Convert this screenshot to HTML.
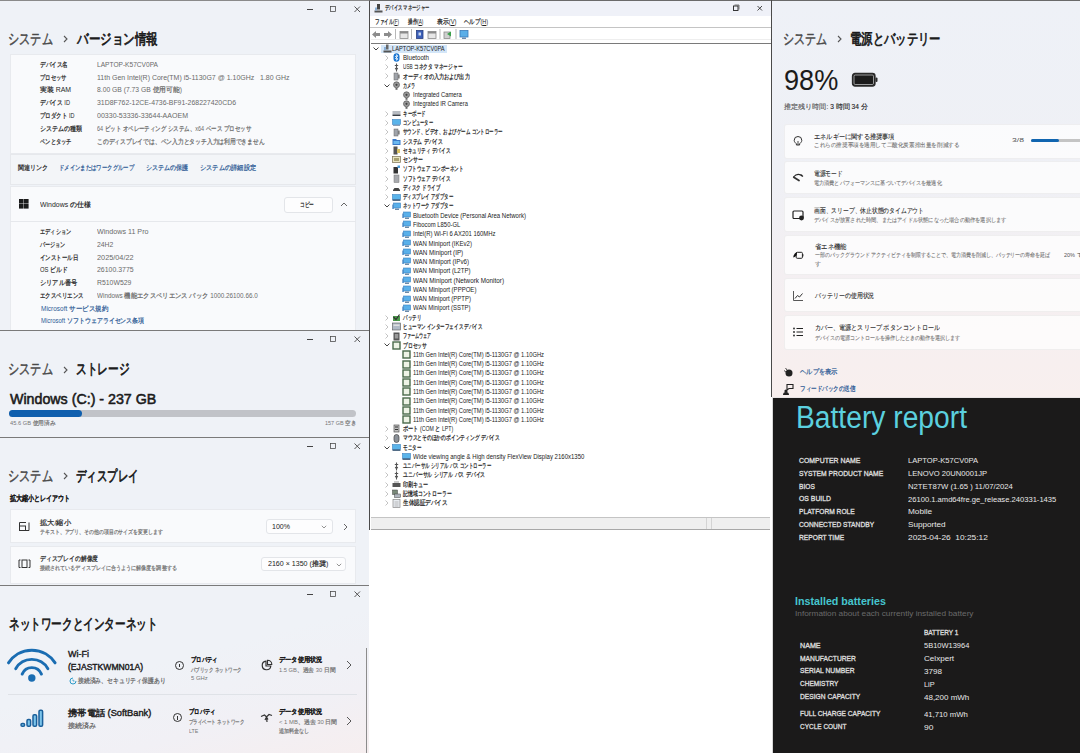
<!DOCTYPE html><html><head><meta charset="utf-8"><style>
html,body{margin:0;padding:0;width:1080px;height:753px;overflow:hidden;background:#fff}
body{position:relative;font-family:"Liberation Sans",sans-serif}
.r,.t{position:absolute}
.t{white-space:nowrap}
.j{-webkit-text-stroke:0.22px currentColor}
</style></head><body>
<div class="r" style="left:0px;top:0px;width:370px;height:330px;background:#eff2f7;"></div>
<div class="r" style="left:0px;top:0px;width:370px;height:1px;background:#8a8a8a;"></div>
<svg class="r" style="left:300px;top:3px" width="66" height="12" viewBox="0 0 66 12"><path d="M7 6.5H13" stroke="#444" stroke-width="1"/><rect x="30.5" y="3.5" width="5" height="5" fill="none" stroke="#444" stroke-width="0.75"/><path d="M54.5 3.5L60 9M60 3.5L54.5 9" stroke="#444" stroke-width="0.9"/></svg>
<div id="s0" class="t " style="left:8.3px;top:28.9px;font-size:14.5px;line-height:20.3px;color:#4a4a4a;font-weight:normal;-webkit-text-stroke:0.45px currentColor;transform:scaleX(0.7450);transform-origin:0 50%;">システム</div>
<svg class="r" style="left:63px;top:35.0px" width="5" height="8" viewBox="0 0 5 8"><path d="M1 1L4 4L1 7" fill="none" stroke="#555" stroke-width="1.1"/></svg>
<div id="s1" class="t " style="left:76.7px;top:28.9px;font-size:14.5px;line-height:20.3px;color:#1b1b1b;font-weight:normal;-webkit-text-stroke:0.7px currentColor;transform:scaleX(0.7695);transform-origin:0 50%;">バージョン情報</div>
<div class="r" style="left:10px;top:54px;width:346px;height:100px;background:#f9fafc;border:1px solid #e8eaee;box-sizing:border-box"></div>
<div id="s2" class="t " style="left:40px;top:59.6px;font-size:7px;line-height:9.8px;color:#262626;font-weight:normal;transform:scaleX(0.8000);transform-origin:0 50%;"><span class="j">デバイス名</span></div>
<div id="s3" class="t " style="left:96.7px;top:59.6px;font-size:7px;line-height:9.8px;color:#6a6a6a;font-weight:normal;transform:scaleX(0.9425);transform-origin:0 50%;">LAPTOP-K57CV0PA</div>
<div id="s4" class="t " style="left:40px;top:72.5px;font-size:7px;line-height:9.8px;color:#262626;font-weight:normal;transform:scaleX(0.7571);transform-origin:0 50%;"><span class="j">プロセッサ</span></div>
<div id="s5" class="t " style="left:96.7px;top:72.5px;font-size:7px;line-height:9.8px;color:#6a6a6a;font-weight:normal;transform:scaleX(0.9964);transform-origin:0 50%;">11th Gen Intel(R) Core(TM) i5-1130G7 @ 1.10GHz&nbsp;&nbsp; 1.80 GHz</div>
<div id="s6" class="t " style="left:40px;top:85.3px;font-size:7px;line-height:9.8px;color:#262626;font-weight:normal;transform:scaleX(0.9841);transform-origin:0 50%;"><span class="j">実装</span> RAM</div>
<div id="s7" class="t " style="left:96.7px;top:85.3px;font-size:7px;line-height:9.8px;color:#6a6a6a;font-weight:normal;transform:scaleX(0.9666);transform-origin:0 50%;">8.00 GB (7.73 GB <span class="j">使用可能</span>)</div>
<div id="s8" class="t " style="left:40px;top:98.2px;font-size:7px;line-height:9.8px;color:#262626;font-weight:normal;transform:scaleX(0.8118);transform-origin:0 50%;"><span class="j">デバイス</span> ID</div>
<div id="s9" class="t " style="left:96.7px;top:98.2px;font-size:7px;line-height:9.8px;color:#6a6a6a;font-weight:normal;transform:scaleX(0.9867);transform-origin:0 50%;">31D8F762-12CE-4736-BF91-268227420CD6</div>
<div id="s10" class="t " style="left:40px;top:111.1px;font-size:7px;line-height:9.8px;color:#262626;font-weight:normal;transform:scaleX(0.7849);transform-origin:0 50%;"><span class="j">プロダクト</span> ID</div>
<div id="s11" class="t " style="left:96.7px;top:111.1px;font-size:7px;line-height:9.8px;color:#6a6a6a;font-weight:normal;transform:scaleX(1.0036);transform-origin:0 50%;">00330-53336-33644-AAOEM</div>
<div id="s12" class="t " style="left:40px;top:123.9px;font-size:7px;line-height:9.8px;color:#262626;font-weight:normal;transform:scaleX(0.8571);transform-origin:0 50%;"><span class="j">システムの種類</span></div>
<div id="s13" class="t " style="left:96.7px;top:123.9px;font-size:7px;line-height:9.8px;color:#6a6a6a;font-weight:normal;transform:scaleX(0.7824);transform-origin:0 50%;">64 <span class="j">ビット</span> <span class="j">オペレーティング</span> <span class="j">システム、</span>x64 <span class="j">ベース</span> <span class="j">プロセッサ</span></div>
<div id="s14" class="t " style="left:40px;top:136.8px;font-size:7px;line-height:9.8px;color:#262626;font-weight:normal;transform:scaleX(0.7500);transform-origin:0 50%;"><span class="j">ペンとタッチ</span></div>
<div id="s15" class="t " style="left:96.7px;top:136.8px;font-size:7px;line-height:9.8px;color:#6a6a6a;font-weight:normal;transform:scaleX(0.8251);transform-origin:0 50%;"><span class="j">このディスプレイでは、ペン入力とタッチ入力は利用できません</span></div>
<div class="r" style="left:10px;top:154px;width:346px;height:31px;background:#f3f5f8;border:1px solid #e6e8ec;box-sizing:border-box"></div>
<div id="s16" class="t " style="left:18px;top:163.1px;font-size:7px;line-height:9.8px;color:#262626;font-weight:normal;transform:scaleX(0.8571);transform-origin:0 50%;"><span class="j">関連リンク</span></div>
<div id="s17" class="t " style="left:59px;top:163.1px;font-size:7px;line-height:9.8px;color:#2d5a95;font-weight:normal;transform:scaleX(0.7653);transform-origin:0 50%;"><span class="j">ドメインまたはワークグループ</span></div>
<div id="s18" class="t " style="left:145.5px;top:163.1px;font-size:7px;line-height:9.8px;color:#2d5a95;font-weight:normal;transform:scaleX(0.8571);transform-origin:0 50%;"><span class="j">システムの保護</span></div>
<div id="s19" class="t " style="left:200.3px;top:163.1px;font-size:7px;line-height:9.8px;color:#2d5a95;font-weight:normal;transform:scaleX(0.8889);transform-origin:0 50%;"><span class="j">システムの詳細設定</span></div>
<div class="r" style="left:10px;top:186px;width:346px;height:145px;background:#f9fafc;border:1px solid #e8eaee;box-sizing:border-box"></div>
<div class="r" style="left:10px;top:221px;width:346px;height:1px;background:#e6e8ec;"></div>
<div class="r" style="left:19px;top:199px;width:10px;height:10px;background:linear-gradient(#1b1b1b,#1b1b1b) 0 0/4.6px 4.6px no-repeat,linear-gradient(#1b1b1b,#1b1b1b) 5.4px 0/4.6px 4.6px no-repeat,linear-gradient(#1b1b1b,#1b1b1b) 0 5.4px/4.6px 4.6px no-repeat,linear-gradient(#1b1b1b,#1b1b1b) 5.4px 5.4px/4.6px 4.6px no-repeat"></div>
<div id="s20" class="t " style="left:40px;top:199.8px;font-size:7px;line-height:9.8px;color:#262626;font-weight:normal;transform:scaleX(0.9894);transform-origin:0 50%;">Windows <span class="j">の仕様</span></div>
<div class="r" style="left:284px;top:197px;width:49px;height:16px;background:#fdfdfe;border:1px solid #e3e5e9;border-radius:3px;box-sizing:border-box"></div>
<div id="s21" class="t " style="left:299.7px;top:200.1px;font-size:7px;line-height:9.8px;color:#222;font-weight:normal;transform:scaleX(0.6667);transform-origin:0 50%;"><span class="j">コピー</span></div>
<svg class="r" style="left:340px;top:202px" width="8" height="5" viewBox="0 0 8 5"><path d="M1 4L4 1L7 4" fill="none" stroke="#555" stroke-width="0.9"/></svg>
<div id="s22" class="t " style="left:40px;top:226.7px;font-size:7px;line-height:9.8px;color:#262626;font-weight:normal;transform:scaleX(0.7381);transform-origin:0 50%;"><span class="j">エディション</span></div>
<div id="s23" class="t " style="left:96.7px;top:226.7px;font-size:7px;line-height:9.8px;color:#6a6a6a;font-weight:normal;transform:scaleX(1.0207);transform-origin:0 50%;">Windows 11 Pro</div>
<div id="s24" class="t " style="left:40px;top:239.6px;font-size:7px;line-height:9.8px;color:#262626;font-weight:normal;transform:scaleX(0.7286);transform-origin:0 50%;"><span class="j">バージョン</span></div>
<div id="s25" class="t " style="left:96.7px;top:239.6px;font-size:7px;line-height:9.8px;color:#6a6a6a;font-weight:normal;transform:scaleX(0.9740);transform-origin:0 50%;">24H2</div>
<div id="s26" class="t " style="left:40px;top:252.5px;font-size:7px;line-height:9.8px;color:#262626;font-weight:normal;transform:scaleX(0.7816);transform-origin:0 50%;"><span class="j">インストール日</span></div>
<div id="s27" class="t " style="left:96.7px;top:252.5px;font-size:7px;line-height:9.8px;color:#6a6a6a;font-weight:normal;transform:scaleX(1.0443);transform-origin:0 50%;">2025/04/22</div>
<div id="s28" class="t " style="left:40px;top:265.4px;font-size:7px;line-height:9.8px;color:#262626;font-weight:normal;transform:scaleX(0.8378);transform-origin:0 50%;">OS <span class="j">ビルド</span></div>
<div id="s29" class="t " style="left:96.7px;top:265.4px;font-size:7px;line-height:9.8px;color:#6a6a6a;font-weight:normal;transform:scaleX(0.9896);transform-origin:0 50%;">26100.3775</div>
<div id="s30" class="t " style="left:40px;top:278.3px;font-size:7px;line-height:9.8px;color:#262626;font-weight:normal;transform:scaleX(0.8857);transform-origin:0 50%;"><span class="j">シリアル番号</span></div>
<div id="s31" class="t " style="left:96.7px;top:278.3px;font-size:7px;line-height:9.8px;color:#6a6a6a;font-weight:normal;transform:scaleX(0.9820);transform-origin:0 50%;">R510W529</div>
<div id="s32" class="t " style="left:40px;top:291.2px;font-size:7px;line-height:9.8px;color:#262626;font-weight:normal;transform:scaleX(0.7786);transform-origin:0 50%;"><span class="j">エクスペリエンス</span></div>
<div id="s33" class="t " style="left:96.7px;top:291.2px;font-size:7px;line-height:9.8px;color:#6a6a6a;font-weight:normal;transform:scaleX(0.9038);transform-origin:0 50%;">Windows <span class="j">機能エクスペリエンス</span> <span class="j">パック</span> 1000.26100.66.0</div>
<div id="s34" class="t " style="left:40.6px;top:304.4px;font-size:7px;line-height:9.8px;color:#2d5a95;font-weight:normal;transform:scaleX(0.9261);transform-origin:0 50%;">Microsoft <span class="j">サービス規約</span></div>
<div id="s35" class="t " style="left:40.6px;top:315.5px;font-size:7px;line-height:9.8px;color:#2d5a95;font-weight:normal;transform:scaleX(0.8513);transform-origin:0 50%;">Microsoft <span class="j">ソフトウェアライセンス条項</span></div>
<div class="r" style="left:0px;top:330px;width:370px;height:108px;background:#eff2f7;"></div>
<div class="r" style="left:0px;top:330px;width:370px;height:1px;background:#7a7a7a;"></div>
<svg class="r" style="left:300px;top:333px" width="66" height="12" viewBox="0 0 66 12"><path d="M7 6.5H13" stroke="#444" stroke-width="1"/><rect x="30.5" y="3.5" width="5" height="5" fill="none" stroke="#444" stroke-width="0.75"/><path d="M54.5 3.5L60 9M60 3.5L54.5 9" stroke="#444" stroke-width="0.9"/></svg>
<div id="s36" class="t " style="left:8.3px;top:359.4px;font-size:14.5px;line-height:20.3px;color:#4a4a4a;font-weight:normal;-webkit-text-stroke:0.45px currentColor;transform:scaleX(0.7450);transform-origin:0 50%;">システム</div>
<svg class="r" style="left:63px;top:365.5px" width="5" height="8" viewBox="0 0 5 8"><path d="M1 1L4 4L1 7" fill="none" stroke="#555" stroke-width="1.1"/></svg>
<div id="s37" class="t " style="left:75.8px;top:359.4px;font-size:14.5px;line-height:20.3px;color:#1b1b1b;font-weight:normal;-webkit-text-stroke:0.7px currentColor;transform:scaleX(0.7120);transform-origin:0 50%;">ストレージ</div>
<div id="s38" class="t " style="left:9.7px;top:389.7px;font-size:14px;line-height:19.6px;color:#1b1b1b;font-weight:normal;-webkit-text-stroke:0.55px currentColor;transform:scaleX(1.0164);transform-origin:0 50%;">Windows (C:) - 237 GB</div>
<div class="r" style="left:9px;top:410px;width:347px;height:7px;background:#c1c3c8;border-radius:3.5px"></div>
<div class="r" style="left:9px;top:410px;width:73px;height:7px;background:#0f5fae;border-radius:3.5px"></div>
<div id="s39" class="t " style="left:9.5px;top:419.1px;font-size:6px;line-height:8.4px;color:#777;font-weight:normal;transform:scaleX(0.9541);transform-origin:0 50%;">45.6 GB <span class="j">使用済み</span></div>
<div id="s40" class="t " style="left:325px;top:419.1px;font-size:6px;line-height:8.4px;color:#777;font-weight:normal;transform:scaleX(0.9113);transform-origin:0 50%;">157 GB <span class="j">空き</span></div>
<div class="r" style="left:0px;top:437px;width:370px;height:148px;background:#eff2f7;"></div>
<div class="r" style="left:0px;top:437px;width:370px;height:1px;background:#7a7a7a;"></div>
<svg class="r" style="left:300px;top:440px" width="66" height="12" viewBox="0 0 66 12"><path d="M7 6.5H13" stroke="#444" stroke-width="1"/><rect x="30.5" y="3.5" width="5" height="5" fill="none" stroke="#444" stroke-width="0.75"/><path d="M54.5 3.5L60 9M60 3.5L54.5 9" stroke="#444" stroke-width="0.9"/></svg>
<div id="s41" class="t " style="left:8.3px;top:465.9px;font-size:14.5px;line-height:20.3px;color:#4a4a4a;font-weight:normal;-webkit-text-stroke:0.45px currentColor;transform:scaleX(0.7450);transform-origin:0 50%;">システム</div>
<svg class="r" style="left:63px;top:472.0px" width="5" height="8" viewBox="0 0 5 8"><path d="M1 1L4 4L1 7" fill="none" stroke="#555" stroke-width="1.1"/></svg>
<div id="s42" class="t " style="left:75.8px;top:465.9px;font-size:14.5px;line-height:20.3px;color:#1b1b1b;font-weight:normal;-webkit-text-stroke:0.7px currentColor;transform:scaleX(0.6944);transform-origin:0 50%;">ディスプレイ</div>
<div id="s43" class="t " style="left:9.5px;top:494.2px;font-size:7.5px;line-height:10.5px;color:#1b1b1b;font-weight:normal;-webkit-text-stroke:0.55px currentColor;transform:scaleX(0.7562);transform-origin:0 50%;">拡大縮小とレイアウト</div>
<div class="r" style="left:10px;top:509px;width:346px;height:34px;background:#f9fafc;border:1px solid #e8eaee;box-sizing:border-box"></div>
<div class="r" style="left:10px;top:546px;width:346px;height:38px;background:#f9fafc;border:1px solid #e8eaee;box-sizing:border-box"></div>
<svg class="r" style="left:18px;top:521px" width="13" height="11" viewBox="0 0 13 11"><path d="M1.5 5V1.5H8M11 1.5V9.5H4" fill="none" stroke="#333" stroke-width="1"/><rect x="1.5" y="5" width="6" height="4.5" fill="none" stroke="#333" stroke-width="1"/></svg>
<svg class="r" style="left:18px;top:559px" width="13" height="10" viewBox="0 0 13 10"><path d="M2.5 1H1V8.5H2.5M10.5 1H12V8.5H10.5" fill="none" stroke="#333" stroke-width="1"/><rect x="4" y="1" width="5" height="7.5" fill="none" stroke="#333" stroke-width="1"/></svg>
<div id="s44" class="t " style="left:40px;top:517.6px;font-size:7px;line-height:9.8px;color:#262626;font-weight:normal;transform:scaleX(1.0283);transform-origin:0 50%;"><span class="j">拡大</span>/<span class="j">縮小</span></div>
<div id="s45" class="t " style="left:40px;top:527.5px;font-size:6px;line-height:8.4px;color:#777;font-weight:normal;transform:scaleX(0.8167);transform-origin:0 50%;"><span class="j">テキスト、アプリ、その他の項目のサイズを変更します</span></div>
<div id="s46" class="t " style="left:40px;top:554.1px;font-size:7px;line-height:9.8px;color:#262626;font-weight:normal;transform:scaleX(0.8329);transform-origin:0 50%;"><span class="j">ディスプレイの解像度</span></div>
<div id="s47" class="t " style="left:40px;top:564.1px;font-size:6px;line-height:8.4px;color:#777;font-weight:normal;transform:scaleX(0.8438);transform-origin:0 50%;"><span class="j">接続されているディスプレイに合うように解像度を調整する</span></div>
<div class="r" style="left:266px;top:519px;width:67px;height:15px;background:#fdfdfe;border:1px solid #e3e5e9;border-radius:3px;box-sizing:border-box"></div>
<div id="s48" class="t " style="left:272px;top:521.6px;font-size:7px;line-height:9.8px;color:#222;font-weight:normal;transform:scaleX(1.0052);transform-origin:0 50%;">100%</div>
<svg class="r" style="left:321px;top:525px" width="6" height="4" viewBox="0 0 6 4"><path d="M0.8 0.8L3 3L5.2 0.8" fill="none" stroke="#777" stroke-width="0.8"/></svg>
<svg class="r" style="left:342.5px;top:522.5px" width="5" height="8" viewBox="0 0 5 8"><path d="M1 1L4 4L1 7" fill="none" stroke="#555" stroke-width="0.9"/></svg>
<div class="r" style="left:261px;top:557px;width:85px;height:14px;background:#fdfdfe;border:1px solid #e3e5e9;border-radius:3px;box-sizing:border-box"></div>
<div id="s49" class="t " style="left:267.5px;top:559.1px;font-size:7px;line-height:9.8px;color:#222;font-weight:normal;transform:scaleX(1.0109);transform-origin:0 50%;">2160 × 1350 (<span class="j">推奨</span>)</div>
<svg class="r" style="left:335.5px;top:562.5px" width="6" height="4" viewBox="0 0 6 4"><path d="M0.8 0.8L3 3L5.2 0.8" fill="none" stroke="#777" stroke-width="0.8"/></svg>
<div class="r" style="left:0;top:585px;width:370px;height:168px;background:linear-gradient(165deg,#eff2f7 45%,#f1f0f5 75%,#f6eeef 100%)"></div>
<div class="r" style="left:0px;top:585px;width:370px;height:1px;background:#7a7a7a;"></div>
<svg class="r" style="left:300px;top:588px" width="66" height="12" viewBox="0 0 66 12"><path d="M7 6.5H13" stroke="#444" stroke-width="1"/><rect x="30.5" y="3.5" width="5" height="5" fill="none" stroke="#444" stroke-width="0.75"/><path d="M54.5 3.5L60 9M60 3.5L54.5 9" stroke="#444" stroke-width="0.9"/></svg>
<div id="s50" class="t " style="left:8.5px;top:613.9px;font-size:14.5px;line-height:20.3px;color:#1b1b1b;font-weight:normal;-webkit-text-stroke:0.7px currentColor;transform:scaleX(0.7071);transform-origin:0 50%;">ネットワークとインターネット</div>
<svg class="r" style="left:0px;top:640px" width="64" height="48" viewBox="0 0 64 48"><path d="M8.48 22.86A27.8 27.8 0 0 1 55.12 22.86" fill="none" stroke="#1a6db2" stroke-width="2.9" stroke-linecap="round"/><path d="M15.69 28.70A18.6 18.6 0 0 1 47.91 28.70" fill="none" stroke="#1a6db2" stroke-width="2.9" stroke-linecap="round"/><path d="M22.16 34.10A10.4 10.4 0 0 1 41.44 34.10" fill="none" stroke="#1a6db2" stroke-width="2.9" stroke-linecap="round"/><circle cx="31.8" cy="38" r="3.7" fill="#1a6db2"/></svg>
<div id="s51" class="t " style="left:68.3px;top:647.9px;font-size:9px;line-height:12.6px;color:#1b1b1b;font-weight:normal;-webkit-text-stroke:0.4px currentColor;transform:scaleX(0.9952);transform-origin:0 50%;">Wi-Fi</div>
<div id="s52" class="t " style="left:68.3px;top:661.2px;font-size:9px;line-height:12.6px;color:#1b1b1b;font-weight:normal;-webkit-text-stroke:0.4px currentColor;transform:scaleX(0.9552);transform-origin:0 50%;">(EJASTKWMN01A)</div>
<svg class="r" style="left:69px;top:677px" width="8" height="8" viewBox="0 0 8 8"><path d="M4 1A3 3 0 1 0 7 4" fill="none" stroke="#2a9ac8" stroke-width="1"/><path d="M4 2.5V4H5.5" fill="none" stroke="#2a9ac8" stroke-width="0.8"/></svg>
<div id="s53" class="t " style="left:77.5px;top:676.2px;font-size:6.5px;line-height:9.1px;color:#666;font-weight:normal;transform:scaleX(0.8333);transform-origin:0 50%;"><span class="j">接続済み、セキュリティ保護あり</span></div>
<div class="r" style="left:8px;top:694px;width:349px;height:1px;background:#dfe2e7;"></div>
<svg class="r" style="left:19px;top:708px" width="25" height="20" viewBox="0 0 25 20"><rect x="2" y="15.5" width="3.6" height="2.8" rx="1.3" fill="#7cc4ea" stroke="#1a5f9a" stroke-width="1.5"/><rect x="8" y="11.5" width="3.6" height="6.8" rx="1.3" fill="#7cc4ea" stroke="#1a5f9a" stroke-width="1.5"/><rect x="14" y="6.8" width="3.6" height="11.5" rx="1.3" fill="#7cc4ea" stroke="#1a5f9a" stroke-width="1.5"/><rect x="20" y="2.3" width="3.6" height="16" rx="1.3" fill="#7cc4ea" stroke="#1a5f9a" stroke-width="1.5"/></svg>
<div id="s54" class="t " style="left:67.5px;top:707.0px;font-size:9px;line-height:12.6px;color:#1b1b1b;font-weight:normal;-webkit-text-stroke:0.4px currentColor;transform:scaleX(1.0280);transform-origin:0 50%;">携帯電話 (SoftBank)</div>
<div id="s55" class="t " style="left:67.5px;top:721.2px;font-size:6.5px;line-height:9.1px;color:#666;font-weight:normal;transform:scaleX(1.0107);transform-origin:0 50%;"><span class="j">接続済み</span></div>
<div class="r" style="left:174.5px;top:660.5px;width:9px;height:9px;border-radius:5px;border:1px solid #333;box-sizing:border-box"></div>
<div class="r" style="left:178.5px;top:663.5px;width:1px;height:3.5px;background:#333;"></div>
<div class="r" style="left:172.5px;top:713.0px;width:9px;height:9px;border-radius:5px;border:1px solid #333;box-sizing:border-box"></div>
<div class="r" style="left:176.5px;top:716.0px;width:1px;height:3.5px;background:#333;"></div>
<div id="s56" class="t " style="left:191px;top:654.7px;font-size:7px;line-height:9.8px;color:#1b1b1b;font-weight:normal;-webkit-text-stroke:0.5px currentColor;transform:scaleX(0.7543);transform-origin:0 50%;">プロパティ</div>
<div id="s57" class="t " style="left:191px;top:666.1px;font-size:6px;line-height:8.4px;color:#777;font-weight:normal;transform:scaleX(0.7492);transform-origin:0 50%;"><span class="j">パブリック</span> <span class="j">ネットワーク</span></div>
<div id="s58" class="t " style="left:191px;top:674.4px;font-size:6px;line-height:8.4px;color:#777;font-weight:normal;transform:scaleX(0.9815);transform-origin:0 50%;">5 GHz</div>
<div id="s59" class="t " style="left:189px;top:706.8px;font-size:7px;line-height:9.8px;color:#1b1b1b;font-weight:normal;-webkit-text-stroke:0.5px currentColor;transform:scaleX(0.7543);transform-origin:0 50%;">プロパティ</div>
<div id="s60" class="t " style="left:189px;top:717.6px;font-size:6px;line-height:8.4px;color:#777;font-weight:normal;transform:scaleX(0.7466);transform-origin:0 50%;"><span class="j">プライベート</span> <span class="j">ネットワーク</span></div>
<div id="s61" class="t " style="left:189px;top:726.6px;font-size:6px;line-height:8.4px;color:#777;font-weight:normal;transform:scaleX(0.8805);transform-origin:0 50%;">LTE</div>
<svg class="r" style="left:260px;top:659px" width="13" height="13" viewBox="0 0 13 13"><path d="M6 2.2A4.3 4.3 0 1 0 10.8 7H6Z" fill="none" stroke="#333" stroke-width="1.2"/><path d="M7.5 1.2A4.3 4.3 0 0 1 11.8 5.5H7.5Z" fill="none" stroke="#333" stroke-width="1.1"/></svg>
<svg class="r" style="left:260px;top:711px" width="13" height="12" viewBox="0 0 13 12"><path d="M1 5.5L4.5 4L6.5 6L9 3.5L12 4.5M5 9L6.5 6L8 8.5M6.5 6L7 11" fill="none" stroke="#333" stroke-width="1.2"/></svg>
<div id="s62" class="t " style="left:278.7px;top:654.7px;font-size:7px;line-height:9.8px;color:#1b1b1b;font-weight:normal;-webkit-text-stroke:0.5px currentColor;transform:scaleX(0.8918);transform-origin:0 50%;">データ使用状況</div>
<div id="s63" class="t " style="left:278.7px;top:666.1px;font-size:6px;line-height:8.4px;color:#777;font-weight:normal;transform:scaleX(0.9591);transform-origin:0 50%;">1.5 GB<span class="j">、過去</span> 30 <span class="j">日間</span></div>
<div id="s64" class="t " style="left:278.7px;top:706.8px;font-size:7px;line-height:9.8px;color:#1b1b1b;font-weight:normal;-webkit-text-stroke:0.5px currentColor;transform:scaleX(0.8918);transform-origin:0 50%;">データ使用状況</div>
<div id="s65" class="t " style="left:278.7px;top:717.6px;font-size:6px;line-height:8.4px;color:#777;font-weight:normal;transform:scaleX(0.9847);transform-origin:0 50%;">&lt; 1 MB<span class="j">、過去</span> 30 <span class="j">日間</span></div>
<div id="s66" class="t " style="left:278.7px;top:727.0px;font-size:6px;line-height:8.4px;color:#777;font-weight:normal;transform:scaleX(0.8361);transform-origin:0 50%;"><span class="j">追加料金なし</span></div>
<svg class="r" style="left:346px;top:660px" width="6" height="10" viewBox="0 0 6 10"><path d="M1 1L5 5L1 9" fill="none" stroke="#444" stroke-width="0.9"/></svg>
<svg class="r" style="left:346px;top:715.5px" width="6" height="10" viewBox="0 0 6 10"><path d="M1 1L5 5L1 9" fill="none" stroke="#444" stroke-width="0.9"/></svg>
<div class="r" style="left:366px;top:648px;width:1.2px;height:105px;background:#8c8c8c;"></div>
<div class="r" style="left:369px;top:0px;width:403px;height:530px;background:#ffffff;"></div>
<div class="r" style="left:369px;top:0px;width:1px;height:530px;background:#4a4a4a;"></div>
<div class="r" style="left:369px;top:0px;width:403px;height:1px;background:#6a6a6a;"></div>
<div class="r" style="left:370px;top:1px;width:402px;height:15px;background:#eff1f8;"></div>
<svg class="r" style="left:374px;top:3.5px" width="9" height="9" viewBox="0 0 9 9"><rect x="3" y="0" width="3" height="5.5" fill="#444"/><rect x="0.5" y="6.5" width="8" height="2" fill="#555"/><rect x="1" y="3.5" width="2" height="3" fill="#8ab0d8"/></svg>
<div id="s67" class="t " style="left:384.7px;top:3.4px;font-size:7px;line-height:9.8px;color:#222;font-weight:normal;transform:scaleX(0.6157);transform-origin:0 50%;"><span class="j">デバイス</span> <span class="j">マネージャー</span></div>
<svg class="r" style="left:728px;top:2px" width="40" height="12" viewBox="0 0 40 12"><rect x="5.5" y="4" width="4.5" height="4.5" fill="none" stroke="#222" stroke-width="0.9"/><path d="M6.5 3H11V7.5" fill="none" stroke="#444" stroke-width="0.7"/><path d="M29.5 4L34 8.5M34 4L29.5 8.5" stroke="#333" stroke-width="0.9"/></svg>
<div id="s68" class="t " style="left:374.5px;top:17.0px;font-size:7px;line-height:9.8px;color:#222;font-weight:normal;transform:scaleX(0.6492);transform-origin:0 50%;"><span class="j">ファイル</span>(<u>F</u>)</div>
<div id="s69" class="t " style="left:407.8px;top:17.0px;font-size:7px;line-height:9.8px;color:#222;font-weight:normal;transform:scaleX(0.6593);transform-origin:0 50%;"><span class="j">操作</span>(<u>A</u>)</div>
<div id="s70" class="t " style="left:436.5px;top:17.0px;font-size:7px;line-height:9.8px;color:#222;font-weight:normal;transform:scaleX(0.8348);transform-origin:0 50%;"><span class="j">表示</span>(<u>V</u>)</div>
<div id="s71" class="t " style="left:464.3px;top:17.0px;font-size:7px;line-height:9.8px;color:#222;font-weight:normal;transform:scaleX(0.7805);transform-origin:0 50%;"><span class="j">ヘルプ</span>(<u>H</u>)</div>
<div class="r" style="left:370px;top:27px;width:402px;height:1px;background:#c4c4c4;"></div>
<svg class="r" style="left:370px;top:28px" width="110" height="14" viewBox="0 0 110 14"><path d="M2 6.5L6 3V5H10V8H6V10Z" fill="#8c8c8c"/><path d="M22 6.5L18 3V5H14V8H18V10Z" fill="#8c8c8c"/><rect x="25" y="1" width="1" height="10" fill="#b8b8b8"/><rect x="30" y="3.5" width="8" height="7" fill="#e6e6e6" stroke="#8a8a8a" stroke-width="0.8"/><rect x="30" y="3.5" width="8" height="2" fill="#8a8a8a"/><rect x="41" y="1" width="1" height="10" fill="#b8b8b8"/><rect x="46.5" y="2.5" width="6.5" height="8" fill="#3b5fb8" stroke="#283f80" stroke-width="0.8"/><rect x="48.5" y="4.5" width="2.5" height="3" fill="#c8d6f0"/><rect x="58" y="3.5" width="8" height="7" fill="#e6e6e6" stroke="#8a8a8a" stroke-width="0.8"/><rect x="58" y="3.5" width="8" height="2" fill="#8a8a8a"/><rect x="69.5" y="1" width="1" height="10" fill="#b8b8b8"/><rect x="74" y="4" width="6" height="6.5" fill="#cfcfcf" stroke="#8a8a8a" stroke-width="0.8"/><path d="M77 6L81 3.5V8.5Z" fill="#3aa04a"/><rect x="85.5" y="1" width="1" height="10" fill="#b8b8b8"/><rect x="90" y="2.5" width="8" height="6.5" fill="#5aaee8" stroke="#3a7ab8" stroke-width="0.8"/><rect x="92" y="9.5" width="4" height="1.5" fill="#6a8ab0"/></svg>
<div class="r" style="left:370.5px;top:39px;width:401px;height:1px;background:#eeeeee;"></div>
<div class="r" style="left:370.5px;top:42.5px;width:401px;height:1px;background:#7a7a7a;"></div>
<div class="r" style="left:381px;top:44.5px;width:66px;height:8.5px;background:#d3e6f8;"></div>
<svg class="r" style="left:373px;top:46.6px" width="6" height="4" viewBox="0 0 6 4"><path d="M0.5 0.5L3 3L5.5 0.5" stroke="#444" stroke-width="1" fill="none"/></svg>
<svg class="r" style="left:382.5px;top:44.1px" width="9" height="9" viewBox="0 0 9 9"><rect x="3" y="0.5" width="2.5" height="5" fill="#666"/><rect x="0.5" y="6.5" width="8" height="2" fill="#555"/><rect x="1" y="3" width="2" height="3" fill="#8ab0d8"/></svg>
<div id="s72" class="t " style="left:392.4px;top:43.7px;font-size:7px;line-height:9.8px;color:#1b1b1b;font-weight:normal;transform:scaleX(0.8127);transform-origin:0 50%;">LAPTOP-K57CV0PA</div>
<svg class="r" style="left:384.5px;top:54.9px" width="4" height="6" viewBox="0 0 4 6"><path d="M0.5 0.5L3 3L0.5 5.5" stroke="#b4b4b4" stroke-width="0.8" fill="none"/></svg>
<svg class="r" style="left:392.3px;top:53.4px" width="9" height="9" viewBox="0 0 9 9"><rect x="1.5" y="0.2" width="6" height="8.6" rx="3" fill="#1e78d2"/><path d="M3 3L6 6L4.5 7.3V1.7L6 3L3 6" stroke="#fff" stroke-width="0.7" fill="none"/></svg>
<div id="s73" class="t " style="left:402.6px;top:53.0px;font-size:7px;line-height:9.8px;color:#1b1b1b;font-weight:normal;transform:scaleX(0.8786);transform-origin:0 50%;">Bluetooth</div>
<svg class="r" style="left:384.5px;top:64.2px" width="4" height="6" viewBox="0 0 4 6"><path d="M0.5 0.5L3 3L0.5 5.5" stroke="#b4b4b4" stroke-width="0.8" fill="none"/></svg>
<svg class="r" style="left:392.3px;top:62.7px" width="9" height="9" viewBox="0 0 9 9"><path d="M4.5 0.5V8.5M2.8 2.5H6.2M3.2 5L4.5 6.8L5.8 5" stroke="#555" stroke-width="1.1" fill="none"/></svg>
<div id="s74" class="t " style="left:402.6px;top:62.3px;font-size:7px;line-height:9.8px;color:#1b1b1b;font-weight:normal;transform:scaleX(0.6705);transform-origin:0 50%;">USB <span class="j">コネクタ</span> <span class="j">マネージャー</span></div>
<svg class="r" style="left:384.5px;top:73.4px" width="4" height="6" viewBox="0 0 4 6"><path d="M0.5 0.5L3 3L0.5 5.5" stroke="#b4b4b4" stroke-width="0.8" fill="none"/></svg>
<svg class="r" style="left:392.3px;top:71.9px" width="9" height="9" viewBox="0 0 9 9"><rect x="2" y="1" width="4" height="7" fill="#a0a4aa" stroke="#666" stroke-width="0.5"/><rect x="6.3" y="2.5" width="1.2" height="4" fill="#555"/></svg>
<div id="s75" class="t " style="left:402.6px;top:71.5px;font-size:7px;line-height:9.8px;color:#1b1b1b;font-weight:normal;transform:scaleX(0.7330);transform-origin:0 50%;"><span class="j">オーディオの入力および出力</span></div>
<svg class="r" style="left:383.5px;top:83.7px" width="6" height="4" viewBox="0 0 6 4"><path d="M0.5 0.5L3 3L5.5 0.5" stroke="#444" stroke-width="1" fill="none"/></svg>
<svg class="r" style="left:392.3px;top:81.2px" width="9" height="9" viewBox="0 0 9 9"><circle cx="4.5" cy="3.8" r="3" fill="#9a9a9a" stroke="#555" stroke-width="0.7"/><circle cx="4.5" cy="3.8" r="1.1" fill="#444"/><rect x="3.5" y="7" width="2" height="1.8" fill="#666"/></svg>
<div id="s76" class="t " style="left:402.6px;top:80.8px;font-size:7px;line-height:9.8px;color:#1b1b1b;font-weight:normal;transform:scaleX(0.6000);transform-origin:0 50%;"><span class="j">カメラ</span></div>
<svg class="r" style="left:402.3px;top:90.5px" width="9" height="9" viewBox="0 0 9 9"><circle cx="4.5" cy="3.8" r="3" fill="#9a9a9a" stroke="#555" stroke-width="0.7"/><circle cx="4.5" cy="3.8" r="1.1" fill="#444"/><rect x="3.5" y="7" width="2" height="1.8" fill="#666"/></svg>
<div id="s77" class="t " style="left:412.8px;top:90.1px;font-size:7px;line-height:9.8px;color:#1b1b1b;font-weight:normal;transform:scaleX(0.8360);transform-origin:0 50%;">Integrated Camera</div>
<svg class="r" style="left:402.3px;top:99.8px" width="9" height="9" viewBox="0 0 9 9"><circle cx="4.5" cy="3.8" r="3" fill="#9a9a9a" stroke="#555" stroke-width="0.7"/><circle cx="4.5" cy="3.8" r="1.1" fill="#444"/><rect x="3.5" y="7" width="2" height="1.8" fill="#666"/></svg>
<div id="s78" class="t " style="left:412.8px;top:99.4px;font-size:7px;line-height:9.8px;color:#1b1b1b;font-weight:normal;transform:scaleX(0.8141);transform-origin:0 50%;">Integrated IR Camera</div>
<svg class="r" style="left:384.5px;top:110.5px" width="4" height="6" viewBox="0 0 4 6"><path d="M0.5 0.5L3 3L0.5 5.5" stroke="#b4b4b4" stroke-width="0.8" fill="none"/></svg>
<svg class="r" style="left:392.3px;top:109.0px" width="9" height="9" viewBox="0 0 9 9"><rect x="0.5" y="2" width="8" height="3.5" fill="#b8bcc2"/><rect x="0.5" y="5.5" width="8" height="1.5" fill="#3a3f46"/></svg>
<div id="s79" class="t " style="left:402.6px;top:108.6px;font-size:7px;line-height:9.8px;color:#1b1b1b;font-weight:normal;transform:scaleX(0.6429);transform-origin:0 50%;"><span class="j">キーボード</span></div>
<svg class="r" style="left:384.5px;top:119.8px" width="4" height="6" viewBox="0 0 4 6"><path d="M0.5 0.5L3 3L0.5 5.5" stroke="#b4b4b4" stroke-width="0.8" fill="none"/></svg>
<svg class="r" style="left:392.3px;top:118.3px" width="9" height="9" viewBox="0 0 9 9"><rect x="0.5" y="1.5" width="8" height="5" fill="#5ab4ea" stroke="#3a80c0" stroke-width="0.6"/><rect x="1" y="7" width="7" height="1" fill="#8aa0b8"/></svg>
<div id="s80" class="t " style="left:402.6px;top:117.9px;font-size:7px;line-height:9.8px;color:#1b1b1b;font-weight:normal;transform:scaleX(0.6082);transform-origin:0 50%;"><span class="j">コンピューター</span></div>
<svg class="r" style="left:384.5px;top:129.1px" width="4" height="6" viewBox="0 0 4 6"><path d="M0.5 0.5L3 3L0.5 5.5" stroke="#b4b4b4" stroke-width="0.8" fill="none"/></svg>
<svg class="r" style="left:392.3px;top:127.6px" width="9" height="9" viewBox="0 0 9 9"><rect x="2" y="1" width="4" height="7" fill="#a0a4aa" stroke="#666" stroke-width="0.5"/><rect x="6.3" y="2.5" width="1.2" height="4" fill="#555"/></svg>
<div id="s81" class="t " style="left:402.6px;top:127.2px;font-size:7px;line-height:9.8px;color:#1b1b1b;font-weight:normal;transform:scaleX(0.6406);transform-origin:0 50%;"><span class="j">サウンド、ビデオ、およびゲーム</span> <span class="j">コントローラー</span></div>
<svg class="r" style="left:384.5px;top:138.4px" width="4" height="6" viewBox="0 0 4 6"><path d="M0.5 0.5L3 3L0.5 5.5" stroke="#b4b4b4" stroke-width="0.8" fill="none"/></svg>
<svg class="r" style="left:392.3px;top:136.9px" width="9" height="9" viewBox="0 0 9 9"><path d="M0.5 2H4L5 3H8.5V8H0.5Z" fill="#3a7ac8"/><rect x="1.5" y="4" width="6" height="3" fill="#6ab8f0"/></svg>
<div id="s82" class="t " style="left:402.6px;top:136.5px;font-size:7px;line-height:9.8px;color:#1b1b1b;font-weight:normal;transform:scaleX(0.6902);transform-origin:0 50%;"><span class="j">システム</span> <span class="j">デバイス</span></div>
<svg class="r" style="left:384.5px;top:147.6px" width="4" height="6" viewBox="0 0 4 6"><path d="M0.5 0.5L3 3L0.5 5.5" stroke="#b4b4b4" stroke-width="0.8" fill="none"/></svg>
<svg class="r" style="left:392.3px;top:146.1px" width="9" height="9" viewBox="0 0 9 9"><rect x="1.5" y="0.5" width="4" height="8" fill="#555"/><rect x="5" y="3" width="3" height="4" fill="#d8c060"/></svg>
<div id="s83" class="t " style="left:402.6px;top:145.7px;font-size:7px;line-height:9.8px;color:#1b1b1b;font-weight:normal;transform:scaleX(0.6574);transform-origin:0 50%;"><span class="j">セキュリティ</span> <span class="j">デバイス</span></div>
<svg class="r" style="left:384.5px;top:156.9px" width="4" height="6" viewBox="0 0 4 6"><path d="M0.5 0.5L3 3L0.5 5.5" stroke="#b4b4b4" stroke-width="0.8" fill="none"/></svg>
<svg class="r" style="left:392.3px;top:155.4px" width="9" height="9" viewBox="0 0 9 9"><rect x="0.5" y="1.5" width="8" height="6" fill="#e8e4c0" stroke="#7a7050" stroke-width="0.7"/><rect x="2" y="3" width="5" height="3" fill="#a8a070"/></svg>
<div id="s84" class="t " style="left:402.6px;top:155.0px;font-size:7px;line-height:9.8px;color:#1b1b1b;font-weight:normal;transform:scaleX(0.7000);transform-origin:0 50%;"><span class="j">センサー</span></div>
<svg class="r" style="left:384.5px;top:166.2px" width="4" height="6" viewBox="0 0 4 6"><path d="M0.5 0.5L3 3L0.5 5.5" stroke="#b4b4b4" stroke-width="0.8" fill="none"/></svg>
<svg class="r" style="left:392.3px;top:164.7px" width="9" height="9" viewBox="0 0 9 9"><rect x="1.5" y="2" width="4.5" height="6.5" fill="#333"/><rect x="5.5" y="0.5" width="2.5" height="2.5" fill="#4a9ad8"/></svg>
<div id="s85" class="t " style="left:402.6px;top:164.3px;font-size:7px;line-height:9.8px;color:#1b1b1b;font-weight:normal;transform:scaleX(0.6498);transform-origin:0 50%;"><span class="j">ソフトウェア</span> <span class="j">コンポーネント</span></div>
<svg class="r" style="left:384.5px;top:175.5px" width="4" height="6" viewBox="0 0 4 6"><path d="M0.5 0.5L3 3L0.5 5.5" stroke="#b4b4b4" stroke-width="0.8" fill="none"/></svg>
<svg class="r" style="left:392.3px;top:174.0px" width="9" height="9" viewBox="0 0 9 9"><rect x="2" y="1" width="5" height="7.5" fill="#a8aaae" stroke="#777" stroke-width="0.5"/></svg>
<div id="s86" class="t " style="left:402.6px;top:173.6px;font-size:7px;line-height:9.8px;color:#1b1b1b;font-weight:normal;transform:scaleX(0.6574);transform-origin:0 50%;"><span class="j">ソフトウェア</span> <span class="j">デバイス</span></div>
<svg class="r" style="left:384.5px;top:184.7px" width="4" height="6" viewBox="0 0 4 6"><path d="M0.5 0.5L3 3L0.5 5.5" stroke="#b4b4b4" stroke-width="0.8" fill="none"/></svg>
<svg class="r" style="left:392.3px;top:183.2px" width="9" height="9" viewBox="0 0 9 9"><path d="M1 7L2.5 5H6.5L8 7V8H1Z" fill="#444"/></svg>
<div id="s87" class="t " style="left:402.6px;top:182.8px;font-size:7px;line-height:9.8px;color:#1b1b1b;font-weight:normal;transform:scaleX(0.6402);transform-origin:0 50%;"><span class="j">ディスク</span> <span class="j">ドライブ</span></div>
<svg class="r" style="left:384.5px;top:194.0px" width="4" height="6" viewBox="0 0 4 6"><path d="M0.5 0.5L3 3L0.5 5.5" stroke="#b4b4b4" stroke-width="0.8" fill="none"/></svg>
<svg class="r" style="left:392.3px;top:192.5px" width="9" height="9" viewBox="0 0 9 9"><rect x="0.5" y="1.5" width="8" height="5" fill="#5ab4ea" stroke="#3a80c0" stroke-width="0.6"/><rect x="0.5" y="6.5" width="8" height="1.3" fill="#2a4a6a"/></svg>
<div id="s88" class="t " style="left:402.6px;top:192.1px;font-size:7px;line-height:9.8px;color:#1b1b1b;font-weight:normal;transform:scaleX(0.6358);transform-origin:0 50%;"><span class="j">ディスプレイ</span> <span class="j">アダプター</span></div>
<svg class="r" style="left:383.5px;top:204.3px" width="6" height="4" viewBox="0 0 6 4"><path d="M0.5 0.5L3 3L5.5 0.5" stroke="#444" stroke-width="1" fill="none"/></svg>
<svg class="r" style="left:392.3px;top:201.8px" width="9" height="9" viewBox="0 0 9 9"><rect x="1.5" y="1" width="7" height="5" fill="#59b0ea" stroke="#3a80c0" stroke-width="0.6"/><rect x="0.3" y="2.5" width="1.5" height="4.5" fill="#4a8ac8"/><rect x="3" y="6.5" width="4" height="1.5" fill="#6a8aa8"/></svg>
<div id="s89" class="t " style="left:402.6px;top:201.4px;font-size:7px;line-height:9.8px;color:#1b1b1b;font-weight:normal;transform:scaleX(0.6358);transform-origin:0 50%;"><span class="j">ネットワーク</span> <span class="j">アダプター</span></div>
<svg class="r" style="left:402.3px;top:211.1px" width="9" height="9" viewBox="0 0 9 9"><rect x="1.5" y="1" width="7" height="5" fill="#59b0ea" stroke="#3a80c0" stroke-width="0.6"/><rect x="0.3" y="2.5" width="1.5" height="4.5" fill="#4a8ac8"/><rect x="3" y="6.5" width="4" height="1.5" fill="#6a8aa8"/></svg>
<div id="s90" class="t " style="left:412.8px;top:210.7px;font-size:7px;line-height:9.8px;color:#1b1b1b;font-weight:normal;transform:scaleX(0.8618);transform-origin:0 50%;">Bluetooth Device (Personal Area Network)</div>
<svg class="r" style="left:402.3px;top:220.3px" width="9" height="9" viewBox="0 0 9 9"><rect x="1.5" y="1" width="7" height="5" fill="#59b0ea" stroke="#3a80c0" stroke-width="0.6"/><rect x="0.3" y="2.5" width="1.5" height="4.5" fill="#4a8ac8"/><rect x="3" y="6.5" width="4" height="1.5" fill="#6a8aa8"/></svg>
<div id="s91" class="t " style="left:412.8px;top:219.9px;font-size:7px;line-height:9.8px;color:#1b1b1b;font-weight:normal;transform:scaleX(0.8442);transform-origin:0 50%;">Fibocom L850-GL</div>
<svg class="r" style="left:402.3px;top:229.6px" width="9" height="9" viewBox="0 0 9 9"><rect x="1.5" y="1" width="7" height="5" fill="#59b0ea" stroke="#3a80c0" stroke-width="0.6"/><rect x="0.3" y="2.5" width="1.5" height="4.5" fill="#4a8ac8"/><rect x="3" y="6.5" width="4" height="1.5" fill="#6a8aa8"/></svg>
<div id="s92" class="t " style="left:412.8px;top:229.2px;font-size:7px;line-height:9.8px;color:#1b1b1b;font-weight:normal;transform:scaleX(0.8438);transform-origin:0 50%;">Intel(R) Wi-Fi 6 AX201 160MHz</div>
<svg class="r" style="left:402.3px;top:238.9px" width="9" height="9" viewBox="0 0 9 9"><rect x="1.5" y="1" width="7" height="5" fill="#59b0ea" stroke="#3a80c0" stroke-width="0.6"/><rect x="0.3" y="2.5" width="1.5" height="4.5" fill="#4a8ac8"/><rect x="3" y="6.5" width="4" height="1.5" fill="#6a8aa8"/></svg>
<div id="s93" class="t " style="left:412.8px;top:238.5px;font-size:7px;line-height:9.8px;color:#1b1b1b;font-weight:normal;transform:scaleX(0.8651);transform-origin:0 50%;">WAN Miniport (IKEv2)</div>
<svg class="r" style="left:402.3px;top:248.2px" width="9" height="9" viewBox="0 0 9 9"><rect x="1.5" y="1" width="7" height="5" fill="#59b0ea" stroke="#3a80c0" stroke-width="0.6"/><rect x="0.3" y="2.5" width="1.5" height="4.5" fill="#4a8ac8"/><rect x="3" y="6.5" width="4" height="1.5" fill="#6a8aa8"/></svg>
<div id="s94" class="t " style="left:412.8px;top:247.8px;font-size:7px;line-height:9.8px;color:#1b1b1b;font-weight:normal;transform:scaleX(0.8942);transform-origin:0 50%;">WAN Miniport (IP)</div>
<svg class="r" style="left:402.3px;top:257.4px" width="9" height="9" viewBox="0 0 9 9"><rect x="1.5" y="1" width="7" height="5" fill="#59b0ea" stroke="#3a80c0" stroke-width="0.6"/><rect x="0.3" y="2.5" width="1.5" height="4.5" fill="#4a8ac8"/><rect x="3" y="6.5" width="4" height="1.5" fill="#6a8aa8"/></svg>
<div id="s95" class="t " style="left:412.8px;top:257.0px;font-size:7px;line-height:9.8px;color:#1b1b1b;font-weight:normal;transform:scaleX(0.8815);transform-origin:0 50%;">WAN Miniport (IPv6)</div>
<svg class="r" style="left:402.3px;top:266.7px" width="9" height="9" viewBox="0 0 9 9"><rect x="1.5" y="1" width="7" height="5" fill="#59b0ea" stroke="#3a80c0" stroke-width="0.6"/><rect x="0.3" y="2.5" width="1.5" height="4.5" fill="#4a8ac8"/><rect x="3" y="6.5" width="4" height="1.5" fill="#6a8aa8"/></svg>
<div id="s96" class="t " style="left:412.8px;top:266.3px;font-size:7px;line-height:9.8px;color:#1b1b1b;font-weight:normal;transform:scaleX(0.8677);transform-origin:0 50%;">WAN Miniport (L2TP)</div>
<svg class="r" style="left:402.3px;top:276.0px" width="9" height="9" viewBox="0 0 9 9"><rect x="1.5" y="1" width="7" height="5" fill="#59b0ea" stroke="#3a80c0" stroke-width="0.6"/><rect x="0.3" y="2.5" width="1.5" height="4.5" fill="#4a8ac8"/><rect x="3" y="6.5" width="4" height="1.5" fill="#6a8aa8"/></svg>
<div id="s97" class="t " style="left:412.8px;top:275.6px;font-size:7px;line-height:9.8px;color:#1b1b1b;font-weight:normal;transform:scaleX(0.9056);transform-origin:0 50%;">WAN Miniport (Network Monitor)</div>
<svg class="r" style="left:402.3px;top:285.3px" width="9" height="9" viewBox="0 0 9 9"><rect x="1.5" y="1" width="7" height="5" fill="#59b0ea" stroke="#3a80c0" stroke-width="0.6"/><rect x="0.3" y="2.5" width="1.5" height="4.5" fill="#4a8ac8"/><rect x="3" y="6.5" width="4" height="1.5" fill="#6a8aa8"/></svg>
<div id="s98" class="t " style="left:412.8px;top:284.9px;font-size:7px;line-height:9.8px;color:#1b1b1b;font-weight:normal;transform:scaleX(0.8609);transform-origin:0 50%;">WAN Miniport (PPPOE)</div>
<svg class="r" style="left:402.3px;top:294.6px" width="9" height="9" viewBox="0 0 9 9"><rect x="1.5" y="1" width="7" height="5" fill="#59b0ea" stroke="#3a80c0" stroke-width="0.6"/><rect x="0.3" y="2.5" width="1.5" height="4.5" fill="#4a8ac8"/><rect x="3" y="6.5" width="4" height="1.5" fill="#6a8aa8"/></svg>
<div id="s99" class="t " style="left:412.8px;top:294.2px;font-size:7px;line-height:9.8px;color:#1b1b1b;font-weight:normal;transform:scaleX(0.8553);transform-origin:0 50%;">WAN Miniport (PPTP)</div>
<svg class="r" style="left:402.3px;top:303.8px" width="9" height="9" viewBox="0 0 9 9"><rect x="1.5" y="1" width="7" height="5" fill="#59b0ea" stroke="#3a80c0" stroke-width="0.6"/><rect x="0.3" y="2.5" width="1.5" height="4.5" fill="#4a8ac8"/><rect x="3" y="6.5" width="4" height="1.5" fill="#6a8aa8"/></svg>
<div id="s100" class="t " style="left:412.8px;top:303.4px;font-size:7px;line-height:9.8px;color:#1b1b1b;font-weight:normal;transform:scaleX(0.8479);transform-origin:0 50%;">WAN Miniport (SSTP)</div>
<svg class="r" style="left:384.5px;top:314.6px" width="4" height="6" viewBox="0 0 4 6"><path d="M0.5 0.5L3 3L0.5 5.5" stroke="#b4b4b4" stroke-width="0.8" fill="none"/></svg>
<svg class="r" style="left:392.3px;top:313.1px" width="9" height="9" viewBox="0 0 9 9"><rect x="1" y="3" width="7" height="5" fill="#4a9a4a"/><path d="M1.5 4L4 6.5L7.5 1.5" stroke="#333" stroke-width="1.2" fill="none"/></svg>
<div id="s101" class="t " style="left:402.6px;top:312.7px;font-size:7px;line-height:9.8px;color:#1b1b1b;font-weight:normal;transform:scaleX(0.6429);transform-origin:0 50%;"><span class="j">バッテリ</span></div>
<svg class="r" style="left:384.5px;top:323.9px" width="4" height="6" viewBox="0 0 4 6"><path d="M0.5 0.5L3 3L0.5 5.5" stroke="#b4b4b4" stroke-width="0.8" fill="none"/></svg>
<svg class="r" style="left:392.3px;top:322.4px" width="9" height="9" viewBox="0 0 9 9"><rect x="0.5" y="1" width="8" height="7" fill="#b0bac6" stroke="#555" stroke-width="0.6"/><rect x="1.5" y="2.5" width="6" height="1.5" fill="#e0e0e0"/></svg>
<div id="s102" class="t " style="left:402.6px;top:322.0px;font-size:7px;line-height:9.8px;color:#1b1b1b;font-weight:normal;transform:scaleX(0.6460);transform-origin:0 50%;"><span class="j">ヒューマン</span> <span class="j">インターフェイス</span> <span class="j">デバイス</span></div>
<svg class="r" style="left:384.5px;top:333.2px" width="4" height="6" viewBox="0 0 4 6"><path d="M0.5 0.5L3 3L0.5 5.5" stroke="#b4b4b4" stroke-width="0.8" fill="none"/></svg>
<svg class="r" style="left:392.3px;top:331.7px" width="9" height="9" viewBox="0 0 9 9"><rect x="1.5" y="0.5" width="6" height="8" fill="#555"/><rect x="2.8" y="2" width="3.5" height="4.5" fill="#999"/></svg>
<div id="s103" class="t " style="left:402.6px;top:331.3px;font-size:7px;line-height:9.8px;color:#1b1b1b;font-weight:normal;transform:scaleX(0.5776);transform-origin:0 50%;"><span class="j">ファームウェア</span></div>
<svg class="r" style="left:383.5px;top:343.4px" width="6" height="4" viewBox="0 0 6 4"><path d="M0.5 0.5L3 3L5.5 0.5" stroke="#444" stroke-width="1" fill="none"/></svg>
<svg class="r" style="left:392.3px;top:340.9px" width="9" height="9" viewBox="0 0 9 9"><rect x="1" y="1" width="7" height="7" fill="#eef3e6" stroke="#4a6a4a" stroke-width="1.4"/></svg>
<div id="s104" class="t " style="left:402.6px;top:340.5px;font-size:7px;line-height:9.8px;color:#1b1b1b;font-weight:normal;transform:scaleX(0.6857);transform-origin:0 50%;"><span class="j">プロセッサ</span></div>
<svg class="r" style="left:402.3px;top:350.2px" width="9" height="9" viewBox="0 0 9 9"><rect x="1" y="1" width="7" height="7" fill="#eef3e6" stroke="#4a6a4a" stroke-width="1.4"/></svg>
<div id="s105" class="t " style="left:412.8px;top:349.8px;font-size:7px;line-height:9.8px;color:#1b1b1b;font-weight:normal;transform:scaleX(0.8302);transform-origin:0 50%;">11th Gen Intel(R) Core(TM) i5-1130G7 @ 1.10GHz</div>
<svg class="r" style="left:402.3px;top:359.5px" width="9" height="9" viewBox="0 0 9 9"><rect x="1" y="1" width="7" height="7" fill="#eef3e6" stroke="#4a6a4a" stroke-width="1.4"/></svg>
<div id="s106" class="t " style="left:412.8px;top:359.1px;font-size:7px;line-height:9.8px;color:#1b1b1b;font-weight:normal;transform:scaleX(0.8302);transform-origin:0 50%;">11th Gen Intel(R) Core(TM) i5-1130G7 @ 1.10GHz</div>
<svg class="r" style="left:402.3px;top:368.8px" width="9" height="9" viewBox="0 0 9 9"><rect x="1" y="1" width="7" height="7" fill="#eef3e6" stroke="#4a6a4a" stroke-width="1.4"/></svg>
<div id="s107" class="t " style="left:412.8px;top:368.4px;font-size:7px;line-height:9.8px;color:#1b1b1b;font-weight:normal;transform:scaleX(0.8302);transform-origin:0 50%;">11th Gen Intel(R) Core(TM) i5-1130G7 @ 1.10GHz</div>
<svg class="r" style="left:402.3px;top:378.0px" width="9" height="9" viewBox="0 0 9 9"><rect x="1" y="1" width="7" height="7" fill="#eef3e6" stroke="#4a6a4a" stroke-width="1.4"/></svg>
<div id="s108" class="t " style="left:412.8px;top:377.6px;font-size:7px;line-height:9.8px;color:#1b1b1b;font-weight:normal;transform:scaleX(0.8302);transform-origin:0 50%;">11th Gen Intel(R) Core(TM) i5-1130G7 @ 1.10GHz</div>
<svg class="r" style="left:402.3px;top:387.3px" width="9" height="9" viewBox="0 0 9 9"><rect x="1" y="1" width="7" height="7" fill="#eef3e6" stroke="#4a6a4a" stroke-width="1.4"/></svg>
<div id="s109" class="t " style="left:412.8px;top:386.9px;font-size:7px;line-height:9.8px;color:#1b1b1b;font-weight:normal;transform:scaleX(0.8302);transform-origin:0 50%;">11th Gen Intel(R) Core(TM) i5-1130G7 @ 1.10GHz</div>
<svg class="r" style="left:402.3px;top:396.6px" width="9" height="9" viewBox="0 0 9 9"><rect x="1" y="1" width="7" height="7" fill="#eef3e6" stroke="#4a6a4a" stroke-width="1.4"/></svg>
<div id="s110" class="t " style="left:412.8px;top:396.2px;font-size:7px;line-height:9.8px;color:#1b1b1b;font-weight:normal;transform:scaleX(0.8302);transform-origin:0 50%;">11th Gen Intel(R) Core(TM) i5-1130G7 @ 1.10GHz</div>
<svg class="r" style="left:402.3px;top:405.9px" width="9" height="9" viewBox="0 0 9 9"><rect x="1" y="1" width="7" height="7" fill="#eef3e6" stroke="#4a6a4a" stroke-width="1.4"/></svg>
<div id="s111" class="t " style="left:412.8px;top:405.5px;font-size:7px;line-height:9.8px;color:#1b1b1b;font-weight:normal;transform:scaleX(0.8302);transform-origin:0 50%;">11th Gen Intel(R) Core(TM) i5-1130G7 @ 1.10GHz</div>
<svg class="r" style="left:402.3px;top:415.1px" width="9" height="9" viewBox="0 0 9 9"><rect x="1" y="1" width="7" height="7" fill="#eef3e6" stroke="#4a6a4a" stroke-width="1.4"/></svg>
<div id="s112" class="t " style="left:412.8px;top:414.7px;font-size:7px;line-height:9.8px;color:#1b1b1b;font-weight:normal;transform:scaleX(0.8302);transform-origin:0 50%;">11th Gen Intel(R) Core(TM) i5-1130G7 @ 1.10GHz</div>
<svg class="r" style="left:384.5px;top:425.9px" width="4" height="6" viewBox="0 0 4 6"><path d="M0.5 0.5L3 3L0.5 5.5" stroke="#b4b4b4" stroke-width="0.8" fill="none"/></svg>
<svg class="r" style="left:392.3px;top:424.4px" width="9" height="9" viewBox="0 0 9 9"><rect x="2" y="1" width="5" height="7" fill="#c0c0c0" stroke="#555" stroke-width="0.7"/><rect x="3" y="2.5" width="3" height="1" fill="#333"/><rect x="3" y="5" width="3" height="1" fill="#333"/></svg>
<div id="s113" class="t " style="left:402.6px;top:424.0px;font-size:7px;line-height:9.8px;color:#1b1b1b;font-weight:normal;transform:scaleX(0.7416);transform-origin:0 50%;"><span class="j">ポート</span> (COM <span class="j">と</span> LPT)</div>
<svg class="r" style="left:384.5px;top:435.2px" width="4" height="6" viewBox="0 0 4 6"><path d="M0.5 0.5L3 3L0.5 5.5" stroke="#b4b4b4" stroke-width="0.8" fill="none"/></svg>
<svg class="r" style="left:392.3px;top:433.7px" width="9" height="9" viewBox="0 0 9 9"><rect x="2" y="0.5" width="5" height="8" rx="2.5" fill="#8a9098" stroke="#444" stroke-width="0.7"/></svg>
<div id="s114" class="t " style="left:402.6px;top:433.3px;font-size:7px;line-height:9.8px;color:#1b1b1b;font-weight:normal;transform:scaleX(0.6833);transform-origin:0 50%;"><span class="j">マウスとそのほかのポインティング</span> <span class="j">デバイス</span></div>
<svg class="r" style="left:383.5px;top:445.5px" width="6" height="4" viewBox="0 0 6 4"><path d="M0.5 0.5L3 3L5.5 0.5" stroke="#444" stroke-width="1" fill="none"/></svg>
<svg class="r" style="left:392.3px;top:443.0px" width="9" height="9" viewBox="0 0 9 9"><rect x="0.5" y="1.5" width="8" height="5" fill="#5ab4ea" stroke="#3a80c0" stroke-width="0.6"/><rect x="0.5" y="6.5" width="8" height="1.3" fill="#2a4a6a"/></svg>
<div id="s115" class="t " style="left:402.6px;top:442.6px;font-size:7px;line-height:9.8px;color:#1b1b1b;font-weight:normal;transform:scaleX(0.6429);transform-origin:0 50%;"><span class="j">モニター</span></div>
<svg class="r" style="left:402.3px;top:452.2px" width="9" height="9" viewBox="0 0 9 9"><rect x="0.5" y="1.5" width="8" height="5" fill="#5ab4ea" stroke="#3a80c0" stroke-width="0.6"/><rect x="0.5" y="6.5" width="8" height="1.3" fill="#2a4a6a"/></svg>
<div id="s116" class="t " style="left:412.8px;top:451.8px;font-size:7px;line-height:9.8px;color:#1b1b1b;font-weight:normal;transform:scaleX(0.8609);transform-origin:0 50%;">Wide viewing angle &amp; High density FlexView Display 2160x1350</div>
<svg class="r" style="left:384.5px;top:463.0px" width="4" height="6" viewBox="0 0 4 6"><path d="M0.5 0.5L3 3L0.5 5.5" stroke="#b4b4b4" stroke-width="0.8" fill="none"/></svg>
<svg class="r" style="left:392.3px;top:461.5px" width="9" height="9" viewBox="0 0 9 9"><path d="M4.5 0.5V8.5M2.8 2.5H6.2M3.2 5L4.5 6.8L5.8 5" stroke="#555" stroke-width="1.1" fill="none"/></svg>
<div id="s117" class="t " style="left:402.6px;top:461.1px;font-size:7px;line-height:9.8px;color:#1b1b1b;font-weight:normal;transform:scaleX(0.6337);transform-origin:0 50%;"><span class="j">ユニバーサル</span> <span class="j">シリアル</span> <span class="j">バス</span> <span class="j">コントローラー</span></div>
<svg class="r" style="left:384.5px;top:472.3px" width="4" height="6" viewBox="0 0 4 6"><path d="M0.5 0.5L3 3L0.5 5.5" stroke="#b4b4b4" stroke-width="0.8" fill="none"/></svg>
<svg class="r" style="left:392.3px;top:470.8px" width="9" height="9" viewBox="0 0 9 9"><path d="M4.5 0.5V8.5M2.8 2.5H6.2M3.2 5L4.5 6.8L5.8 5" stroke="#555" stroke-width="1.1" fill="none"/></svg>
<div id="s118" class="t " style="left:402.6px;top:470.4px;font-size:7px;line-height:9.8px;color:#1b1b1b;font-weight:normal;transform:scaleX(0.6983);transform-origin:0 50%;"><span class="j">ユニバーサル</span> <span class="j">シリアル</span> <span class="j">バス</span> <span class="j">デバイス</span></div>
<svg class="r" style="left:384.5px;top:481.6px" width="4" height="6" viewBox="0 0 4 6"><path d="M0.5 0.5L3 3L0.5 5.5" stroke="#b4b4b4" stroke-width="0.8" fill="none"/></svg>
<svg class="r" style="left:392.3px;top:480.1px" width="9" height="9" viewBox="0 0 9 9"><rect x="0.5" y="3" width="8" height="4" fill="#555"/><rect x="2" y="1" width="5" height="2" fill="#ccc"/></svg>
<div id="s119" class="t " style="left:402.6px;top:479.7px;font-size:7px;line-height:9.8px;color:#1b1b1b;font-weight:normal;transform:scaleX(0.7257);transform-origin:0 50%;"><span class="j">印刷キュー</span></div>
<svg class="r" style="left:384.5px;top:490.8px" width="4" height="6" viewBox="0 0 4 6"><path d="M0.5 0.5L3 3L0.5 5.5" stroke="#b4b4b4" stroke-width="0.8" fill="none"/></svg>
<svg class="r" style="left:392.3px;top:489.3px" width="9" height="9" viewBox="0 0 9 9"><rect x="0.5" y="1" width="5" height="4.5" fill="#7a8a7a" stroke="#444" stroke-width="0.5"/><rect x="2.5" y="5" width="6" height="3.5" fill="#b0b6be" stroke="#444" stroke-width="0.5"/></svg>
<div id="s120" class="t " style="left:402.6px;top:488.9px;font-size:7px;line-height:9.8px;color:#1b1b1b;font-weight:normal;transform:scaleX(0.6971);transform-origin:0 50%;"><span class="j">記憶域コントローラー</span></div>
<svg class="r" style="left:384.5px;top:500.1px" width="4" height="6" viewBox="0 0 4 6"><path d="M0.5 0.5L3 3L0.5 5.5" stroke="#b4b4b4" stroke-width="0.8" fill="none"/></svg>
<svg class="r" style="left:392.3px;top:498.6px" width="9" height="9" viewBox="0 0 9 9"><rect x="1" y="0.5" width="7" height="8" fill="#e8ecf0" stroke="#888" stroke-width="0.7"/><path d="M2.5 3H6.5M2.5 5H6.5M2.5 7H6.5" stroke="#999" stroke-width="0.6"/></svg>
<div id="s121" class="t " style="left:402.6px;top:498.2px;font-size:7px;line-height:9.8px;color:#1b1b1b;font-weight:normal;transform:scaleX(0.7929);transform-origin:0 50%;"><span class="j">生体認証デバイス</span></div>
<div class="r" style="left:370.5px;top:516.5px;width:399px;height:1px;background:#c4c4c4;"></div>
<div class="r" style="left:370.5px;top:517.5px;width:399px;height:11.5px;background:#efefef;"></div>
<div class="r" style="left:370.5px;top:529px;width:399px;height:1px;background:#a8a8a8;"></div>
<div class="r" style="left:705.5px;top:518px;width:1px;height:11px;background:#d4d4d4;"></div>
<div class="r" style="left:710.5px;top:518px;width:1px;height:11px;background:#d4d4d4;"></div>
<div class="r" style="left:369px;top:530px;width:403px;height:223px;background:#ffffff;"></div>
<div class="r" style="left:772px;top:0;width:308px;height:397px;background:linear-gradient(180deg,#eef1f7 0%,#eff0f5 45%,#f5eff1 75%,#f8efee 100%)"></div>
<div class="r" style="left:771px;top:0px;width:1px;height:397px;background:#4a4a4a;"></div>
<div class="r" style="left:772px;top:0px;width:308px;height:1px;background:#6a6a6a;"></div>
<div id="s122" class="t " style="left:782.8px;top:29.1px;font-size:14.5px;line-height:20.3px;color:#4a4a4a;font-weight:normal;-webkit-text-stroke:0.45px currentColor;transform:scaleX(0.7367);transform-origin:0 50%;">システム</div>
<svg class="r" style="left:837px;top:35.2px" width="5" height="8" viewBox="0 0 5 8"><path d="M1 1L4 4L1 7" fill="none" stroke="#555" stroke-width="1.1"/></svg>
<div id="s123" class="t " style="left:850.3px;top:29.1px;font-size:14.5px;line-height:20.3px;color:#1b1b1b;font-weight:normal;-webkit-text-stroke:0.7px currentColor;transform:scaleX(0.7558);transform-origin:0 50%;">電源とバッテリー</div>
<div id="s124" class="t " style="left:783.5px;top:63.5px;font-size:29.5px;line-height:32.0px;color:#1b1b1b;font-weight:normal;transform:scaleX(0.9196);transform-origin:0 50%;">98%</div>
<svg class="r" style="left:851px;top:72px" width="28" height="16" viewBox="0 0 28 16"><rect x="1.5" y="1.5" width="22.5" height="12.5" rx="2.5" fill="#1e1e1e" stroke="#2a2a2a" stroke-width="1.3"/><rect x="3" y="3" width="19.5" height="9.5" rx="1.2" fill="#1b1b1b" stroke="#f0f1f4" stroke-width="0.6"/><rect x="24.5" y="5.5" width="2" height="4.5" rx="1" fill="#2a2a2a"/></svg>
<div id="s125" class="t " style="left:784px;top:102.2px;font-size:6.5px;line-height:9.1px;color:#555;font-weight:normal;-webkit-text-stroke:0.12px currentColor;transform:scaleX(1.0110);transform-origin:0 50%;">推定残り時間: <span style="color:#222">3 時間 34 分</span></div>
<div class="r" style="left:784px;top:123.5px;width:300px;height:35.8px;background:rgba(255,255,255,0.72);border:1px solid rgba(0,0,0,0.05);box-sizing:border-box;border-radius:3px"></div>
<div class="r" style="left:784px;top:161px;width:300px;height:33.4px;background:rgba(255,255,255,0.72);border:1px solid rgba(0,0,0,0.05);box-sizing:border-box;border-radius:3px"></div>
<div class="r" style="left:784px;top:197.2px;width:300px;height:34.8px;background:rgba(255,255,255,0.72);border:1px solid rgba(0,0,0,0.05);box-sizing:border-box;border-radius:3px"></div>
<div class="r" style="left:784px;top:234.5px;width:300px;height:40.5px;background:rgba(255,255,255,0.72);border:1px solid rgba(0,0,0,0.05);box-sizing:border-box;border-radius:3px"></div>
<div class="r" style="left:784px;top:277.5px;width:300px;height:34.5px;background:rgba(255,255,255,0.72);border:1px solid rgba(0,0,0,0.05);box-sizing:border-box;border-radius:3px"></div>
<div class="r" style="left:784px;top:315px;width:300px;height:34.5px;background:rgba(255,255,255,0.72);border:1px solid rgba(0,0,0,0.05);box-sizing:border-box;border-radius:3px"></div>
<div id="s126" class="t " style="left:814.3px;top:131.6px;font-size:7px;line-height:9.8px;color:#262626;font-weight:normal;-webkit-text-stroke:0.1px currentColor;transform:scaleX(0.8846);transform-origin:0 50%;">エネルギーに関する推奨事項</div>
<div id="s127" class="t " style="left:814.3px;top:141.2px;font-size:6px;line-height:8.4px;color:#777;font-weight:normal;-webkit-text-stroke:0.1px currentColor;transform:scaleX(0.9314);transform-origin:0 50%;">これらの推奨事項を適用して二酸化炭素排出量を削減する</div>
<div id="s128" class="t " style="left:1012px;top:136.4px;font-size:6px;line-height:8.4px;color:#555;font-weight:normal;transform:scaleX(1.4382);transform-origin:0 50%;">3/8</div>
<div class="r" style="left:1030.5px;top:139.3px;width:50px;height:3px;background:#c4c4c4;border-radius:1.5px"></div>
<div class="r" style="left:1030.5px;top:139.3px;width:28.5px;height:3px;background:#1065b0;border-radius:1.5px"></div>
<div id="s129" class="t " style="left:814.3px;top:169.1px;font-size:7px;line-height:9.8px;color:#262626;font-weight:normal;-webkit-text-stroke:0.1px currentColor;transform:scaleX(0.8200);transform-origin:0 50%;">電源モード</div>
<div id="s130" class="t " style="left:814.3px;top:178.8px;font-size:6px;line-height:8.4px;color:#777;font-weight:normal;-webkit-text-stroke:0.1px currentColor;transform:scaleX(0.8513);transform-origin:0 50%;">電力消費とパフォーマンスに基づいてデバイスを最適化</div>
<div id="s131" class="t " style="left:814.3px;top:206.2px;font-size:7px;line-height:9.8px;color:#262626;font-weight:normal;-webkit-text-stroke:0.1px currentColor;transform:scaleX(0.8271);transform-origin:0 50%;">画面、スリープ、休止状態のタイムアウト</div>
<div id="s132" class="t " style="left:814.3px;top:216.2px;font-size:6px;line-height:8.4px;color:#777;font-weight:normal;-webkit-text-stroke:0.1px currentColor;transform:scaleX(0.8671);transform-origin:0 50%;">デバイスが放置された時間、またはアイドル状態になった場合の動作を選択します</div>
<div id="s133" class="t " style="left:814.5px;top:241.9px;font-size:7px;line-height:9.8px;color:#262626;font-weight:normal;-webkit-text-stroke:0.1px currentColor;transform:scaleX(0.9000);transform-origin:0 50%;">省エネ機能</div>
<div id="s134" class="t " style="left:814.5px;top:251.2px;font-size:6px;line-height:8.4px;color:#777;font-weight:normal;-webkit-text-stroke:0.1px currentColor;transform:scaleX(0.8295);transform-origin:0 50%;">一部のバックグラウンド アクティビティを制限することで、電力消費を削減し、バッテリーの寿命を延ば</div>
<div class="t " style="left:814.5px;top:259.8px;font-size:6px;line-height:8.4px;color:#777;font-weight:normal;-webkit-text-stroke:0.1px currentColor;">す</div>
<div id="s135" class="t " style="left:1064px;top:251.2px;font-size:6px;line-height:8.4px;color:#555;font-weight:normal;transform:scaleX(0.9143);transform-origin:0 50%;">20% <span class="j">で</span></div>
<div id="s136" class="t " style="left:814.5px;top:290.7px;font-size:7px;line-height:9.8px;color:#262626;font-weight:normal;-webkit-text-stroke:0.1px currentColor;transform:scaleX(0.8486);transform-origin:0 50%;">バッテリーの使用状況</div>
<div id="s137" class="t " style="left:814.5px;top:323.4px;font-size:7px;line-height:9.8px;color:#262626;font-weight:normal;-webkit-text-stroke:0.1px currentColor;transform:scaleX(0.8673);transform-origin:0 50%;">カバー、電源とスリープ ボタン コントロール</div>
<div id="s138" class="t " style="left:814.5px;top:333.6px;font-size:6px;line-height:8.4px;color:#777;font-weight:normal;-webkit-text-stroke:0.1px currentColor;transform:scaleX(0.8328);transform-origin:0 50%;">デバイスの電源コントロールを操作したときの動作を選択します</div>
<svg class="r" style="left:791px;top:134px" width="14" height="14" viewBox="0 0 14 14"><path d="M7 2.5A3.8 3.8 0 0 1 10.8 6.3C10.8 8 9.5 8.8 8.6 9.8V11H5.4V9.8C4.5 8.8 3.2 8 3.2 6.3A3.8 3.8 0 0 1 7 2.5Z" fill="none" stroke="#333" stroke-width="1"/><path d="M7 11V7" stroke="#333" stroke-width="0.9"/></svg>
<svg class="r" style="left:788px;top:166px" width="20" height="20" viewBox="0 0 20 20"><path d="M5.5 11Q10 6 15 10.5" fill="none" stroke="#2a2a2a" stroke-width="1.1"/><path d="M5.8 11.2L11 14.5" stroke="#333" stroke-width="1.8" stroke-linecap="round"/><circle cx="13.5" cy="9.3" r="0.9" fill="#222"/></svg>
<svg class="r" style="left:791px;top:208px" width="14" height="14" viewBox="0 0 14 14"><rect x="2" y="3" width="10" height="7.5" rx="1" fill="none" stroke="#222" stroke-width="1.2"/><circle cx="10.5" cy="10" r="2.4" fill="#222"/></svg>
<svg class="r" style="left:788px;top:245px" width="20" height="20" viewBox="0 0 20 20"><rect x="8.2" y="7.3" width="6.2" height="6" rx="1" fill="none" stroke="#222" stroke-width="1"/><rect x="14.4" y="9.2" width="1" height="2.2" fill="#222"/><path d="M5.2 12.5C5.5 9.5 7 7.8 9 7.2C9.2 9.8 8 11.8 5.2 12.5Z" fill="#111"/></svg>
<svg class="r" style="left:791px;top:289px" width="14" height="14" viewBox="0 0 14 14"><path d="M2.5 2V11.5H12" fill="none" stroke="#444" stroke-width="0.9"/><path d="M4 9.5L6.5 6.5L8.5 8L11.5 4.5" fill="none" stroke="#333" stroke-width="1"/></svg>
<svg class="r" style="left:791px;top:325px" width="14" height="14" viewBox="0 0 14 14"><path d="M5.5 3.5H12M5.5 7H12M5.5 10.5H12" stroke="#222" stroke-width="1"/><circle cx="3" cy="3.5" r="0.9" fill="#222"/><circle cx="3" cy="7" r="0.9" fill="#222"/><circle cx="3" cy="10.5" r="0.9" fill="#222"/></svg>
<div id="s139" class="t " style="left:800px;top:367.4px;font-size:7px;line-height:9.8px;color:#2d5a95;font-weight:normal;transform:scaleX(0.8929);transform-origin:0 50%;"><span class="j">ヘルプを表示</span></div>
<div id="s140" class="t " style="left:800px;top:384.1px;font-size:7px;line-height:9.8px;color:#2d5a95;font-weight:normal;transform:scaleX(0.7929);transform-origin:0 50%;"><span class="j">フィードバックの送信</span></div>
<svg class="r" style="left:781px;top:365px" width="14" height="14" viewBox="0 0 14 14"><circle cx="8" cy="8" r="3.5" fill="#222"/><path d="M3 5.5L5.5 7.5M4.5 3L6 5" stroke="#333" stroke-width="0.9"/></svg>
<svg class="r" style="left:781px;top:382px" width="14" height="14" viewBox="0 0 14 14"><path d="M6 2.5H12V6.5H8L6 8Z" fill="none" stroke="#222" stroke-width="1.1"/><circle cx="5" cy="9" r="1.6" fill="#222"/><path d="M2 13A3 3 0 0 1 8 13Z" fill="#222"/></svg>
<div class="r" style="left:772px;top:397px;width:308px;height:356px;background:#1b1a1a;"></div>
<div class="r" style="left:772px;top:397px;width:1.2px;height:356px;background:#d8d8d8;"></div>
<div class="r" style="left:772px;top:396.5px;width:308px;height:1px;background:#e8e4e4;"></div>
<div id="s141" class="t " style="left:795.5px;top:400.0px;font-size:31px;line-height:36.0px;color:#5bd0df;font-weight:normal;font-weight:300;transform:scaleX(0.9105);transform-origin:0 50%;">Battery report</div>
<div id="s142" class="t " style="left:799px;top:455.8px;font-size:7px;line-height:9.8px;color:#d8d8d8;font-weight:normal;-webkit-text-stroke:0.35px currentColor;transform:scaleX(0.9866);transform-origin:0 50%;">COMPUTER NAME</div>
<div id="s143" class="t " style="left:907.5px;top:455.1px;font-size:8px;line-height:11.2px;color:#e8e8e8;font-weight:normal;transform:scaleX(0.9463);transform-origin:0 50%;">LAPTOP-K57CV0PA</div>
<div id="s144" class="t " style="left:799px;top:468.6px;font-size:7px;line-height:9.8px;color:#d8d8d8;font-weight:normal;-webkit-text-stroke:0.35px currentColor;transform:scaleX(0.9635);transform-origin:0 50%;">SYSTEM PRODUCT NAME</div>
<div id="s145" class="t " style="left:907.5px;top:467.9px;font-size:8px;line-height:11.2px;color:#e8e8e8;font-weight:normal;transform:scaleX(0.9500);transform-origin:0 50%;">LENOVO 20UN0001JP</div>
<div id="s146" class="t " style="left:799px;top:481.5px;font-size:7px;line-height:9.8px;color:#d8d8d8;font-weight:normal;-webkit-text-stroke:0.35px currentColor;transform:scaleX(0.9442);transform-origin:0 50%;">BIOS</div>
<div id="s147" class="t " style="left:907.5px;top:480.8px;font-size:8px;line-height:11.2px;color:#e8e8e8;font-weight:normal;transform:scaleX(0.9642);transform-origin:0 50%;">N2TET87W (1.65 ) 11/07/2024</div>
<div id="s148" class="t " style="left:799px;top:494.3px;font-size:7px;line-height:9.8px;color:#d8d8d8;font-weight:normal;-webkit-text-stroke:0.35px currentColor;transform:scaleX(0.9790);transform-origin:0 50%;">OS BUILD</div>
<div id="s149" class="t " style="left:907.5px;top:493.6px;font-size:8px;line-height:11.2px;color:#e8e8e8;font-weight:normal;transform:scaleX(0.9499);transform-origin:0 50%;">26100.1.amd64fre.ge_release.240331-1435</div>
<div id="s150" class="t " style="left:799px;top:507.1px;font-size:7px;line-height:9.8px;color:#d8d8d8;font-weight:normal;-webkit-text-stroke:0.35px currentColor;transform:scaleX(0.9504);transform-origin:0 50%;">PLATFORM ROLE</div>
<div id="s151" class="t " style="left:907.5px;top:506.4px;font-size:8px;line-height:11.2px;color:#e8e8e8;font-weight:normal;transform:scaleX(1.0264);transform-origin:0 50%;">Mobile</div>
<div id="s152" class="t " style="left:799px;top:520.0px;font-size:7px;line-height:9.8px;color:#d8d8d8;font-weight:normal;-webkit-text-stroke:0.35px currentColor;transform:scaleX(0.9527);transform-origin:0 50%;">CONNECTED STANDBY</div>
<div id="s153" class="t " style="left:907.5px;top:519.2px;font-size:8px;line-height:11.2px;color:#e8e8e8;font-weight:normal;transform:scaleX(1.0184);transform-origin:0 50%;">Supported</div>
<div id="s154" class="t " style="left:799px;top:532.8px;font-size:7px;line-height:9.8px;color:#d8d8d8;font-weight:normal;-webkit-text-stroke:0.35px currentColor;transform:scaleX(0.9522);transform-origin:0 50%;">REPORT TIME</div>
<div id="s155" class="t " style="left:907.5px;top:532.1px;font-size:8px;line-height:11.2px;color:#e8e8e8;font-weight:normal;transform:scaleX(1.0429);transform-origin:0 50%;">2025-04-26&nbsp;&nbsp;10:25:12</div>
<div id="s156" class="t " style="left:795.3px;top:594.0px;font-size:11.5px;line-height:14.0px;color:#46c6cf;font-weight:bold;transform:scaleX(0.9295);transform-origin:0 50%;">Installed batteries</div>
<div id="s157" class="t " style="left:795.3px;top:608.0px;font-size:8px;line-height:11.2px;color:#6a6a6a;font-weight:normal;transform:scaleX(1.0319);transform-origin:0 50%;">Information about each currently installed battery</div>
<div id="s158" class="t " style="left:923.6px;top:628.2px;font-size:7px;line-height:9.8px;color:#d8d8d8;font-weight:normal;-webkit-text-stroke:0.35px currentColor;transform:scaleX(0.9208);transform-origin:0 50%;">BATTERY 1</div>
<div id="s159" class="t " style="left:799.6px;top:640.6px;font-size:7px;line-height:9.8px;color:#d8d8d8;font-weight:normal;-webkit-text-stroke:0.35px currentColor;transform:scaleX(1.0181);transform-origin:0 50%;">NAME</div>
<div id="s160" class="t " style="left:923.6px;top:639.9px;font-size:8px;line-height:11.2px;color:#e8e8e8;font-weight:normal;transform:scaleX(0.9343);transform-origin:0 50%;">5B10W13964</div>
<div id="s161" class="t " style="left:799.6px;top:653.5px;font-size:7px;line-height:9.8px;color:#d8d8d8;font-weight:normal;-webkit-text-stroke:0.35px currentColor;transform:scaleX(0.9581);transform-origin:0 50%;">MANUFACTURER</div>
<div id="s162" class="t " style="left:923.6px;top:652.8px;font-size:8px;line-height:11.2px;color:#e8e8e8;font-weight:normal;transform:scaleX(1.0102);transform-origin:0 50%;">Celxpert</div>
<div id="s163" class="t " style="left:799.6px;top:666.4px;font-size:7px;line-height:9.8px;color:#d8d8d8;font-weight:normal;-webkit-text-stroke:0.35px currentColor;transform:scaleX(0.9575);transform-origin:0 50%;">SERIAL NUMBER</div>
<div id="s164" class="t " style="left:923.6px;top:665.7px;font-size:8px;line-height:11.2px;color:#e8e8e8;font-weight:normal;transform:scaleX(1.0114);transform-origin:0 50%;">3798</div>
<div id="s165" class="t " style="left:799.6px;top:679.3px;font-size:7px;line-height:9.8px;color:#d8d8d8;font-weight:normal;-webkit-text-stroke:0.35px currentColor;transform:scaleX(0.9341);transform-origin:0 50%;">CHEMISTRY</div>
<div id="s166" class="t " style="left:923.6px;top:678.6px;font-size:8px;line-height:11.2px;color:#e8e8e8;font-weight:normal;transform:scaleX(0.9168);transform-origin:0 50%;">LiP</div>
<div id="s167" class="t " style="left:799.6px;top:692.3px;font-size:7px;line-height:9.8px;color:#d8d8d8;font-weight:normal;-webkit-text-stroke:0.35px currentColor;transform:scaleX(0.9513);transform-origin:0 50%;">DESIGN CAPACITY</div>
<div id="s168" class="t " style="left:923.6px;top:691.6px;font-size:8px;line-height:11.2px;color:#e8e8e8;font-weight:normal;transform:scaleX(0.9987);transform-origin:0 50%;">48,200 mWh</div>
<div id="s169" class="t " style="left:799.6px;top:709.2px;font-size:7px;line-height:9.8px;color:#d8d8d8;font-weight:normal;-webkit-text-stroke:0.35px currentColor;transform:scaleX(0.9438);transform-origin:0 50%;">FULL CHARGE CAPACITY</div>
<div id="s170" class="t " style="left:923.6px;top:708.5px;font-size:8px;line-height:11.2px;color:#e8e8e8;font-weight:normal;transform:scaleX(0.9678);transform-origin:0 50%;">41,710 mWh</div>
<div id="s171" class="t " style="left:799.6px;top:722.4px;font-size:7px;line-height:9.8px;color:#d8d8d8;font-weight:normal;-webkit-text-stroke:0.35px currentColor;transform:scaleX(0.9245);transform-origin:0 50%;">CYCLE COUNT</div>
<div id="s172" class="t " style="left:923.6px;top:721.7px;font-size:8px;line-height:11.2px;color:#e8e8e8;font-weight:normal;transform:scaleX(1.0554);transform-origin:0 50%;">90</div>
</body></html>
